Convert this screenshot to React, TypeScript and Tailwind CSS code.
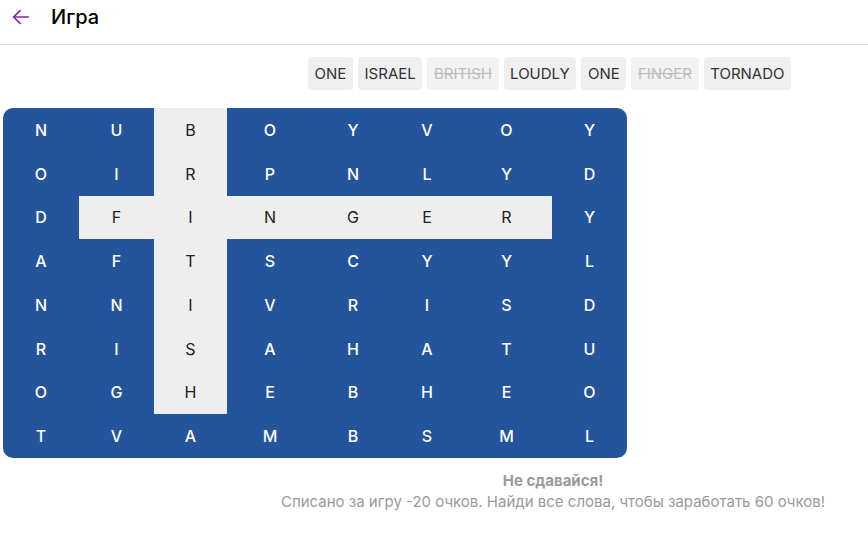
import React from "react";

const grid = [
  "NUBOYVOY",
  "OIRPNLYD",
  "DFINGERY",
  "AFTSCYYL",
  "NNIVRISD",
  "RISAHATU",
  "OGHEBHEO",
  "TVAMBSML",
];

const words = [
  { w: "ONE", done: false },
  { w: "ISRAEL", done: false },
  { w: "BRITISH", done: true },
  { w: "LOUDLY", done: false },
  { w: "ONE", done: false },
  { w: "FINGER", done: true },
  { w: "TORNADO", done: false },
];

function isFound(r: number, c: number) {
  if (c === 2 && r <= 6) return true;
  if (r === 2 && c >= 1 && c <= 6) return true;
  return false;
}

export default function App() {
  return (
    <div className="w-[868px] h-[542px] bg-white font-['Inter',sans-serif] text-[#222]">
      <div className="h-[45px] flex items-start pt-[5px] border-b border-[#e4d3f3]">
        <div className="w-[51px] pl-[10px] pt-[1px] flex items-center">
          <svg width="22" height="22" viewBox="0 0 24 24" fill="none" stroke="#8224b0" strokeWidth="1.8" strokeLinecap="round" strokeLinejoin="round">
            <path d="M20 12H4" />
            <path d="M11 5l-7 7 7 7" />
          </svg>
        </div>
        <h1 className="text-[20px] font-medium text-black leading-[24px]">Игра</h1>
      </div>

      <div className="flex gap-[5px] pl-[308px] pt-[12px]">
        {words.map((x, i) => (
          <span
            key={i}
            className={
              x.done
                ? "h-[33px] px-[6.6px] pt-[1px] flex items-center rounded-[4px] bg-[#f2f2f2] text-[15px] text-[#bdbdbd] line-through"
                : "h-[33px] px-[6.6px] pt-[1px] flex items-center rounded-[4px] bg-[#efefef] text-[15px] text-[#333]"
            }
          >
            {x.w}
          </span>
        ))}
      </div>

      <div className="ml-[3px] mt-[18px] w-[624px] rounded-[10px] overflow-hidden bg-[#24549c] grid grid-cols-[76px_75px_73px_86px_80px_68px_91px_75px]">
        {grid.map((row, r) =>
          row.split("").map((ch, c) => (
            <div
              key={r + "-" + c}
              className={
                isFound(r, c)
                  ? "h-[43.75px] flex items-center justify-center bg-[#eeeeee] text-[#222] text-[16px]"
                  : "h-[43.75px] flex items-center justify-center text-white text-[16px] font-medium"
              }
            >
              {ch}
            </div>
          ))
        )}
      </div>

      <div className="ml-[240px] w-[626px] text-center mt-[12px] text-[#9a9a9a] text-[15px] leading-[21px]">
        <p className="font-bold">Не сдавайся!</p>
        <p>Списано за игру -20 очков. Найди все слова, чтобы заработать 60 очков!</p>
      </div>
    </div>
  );
}
